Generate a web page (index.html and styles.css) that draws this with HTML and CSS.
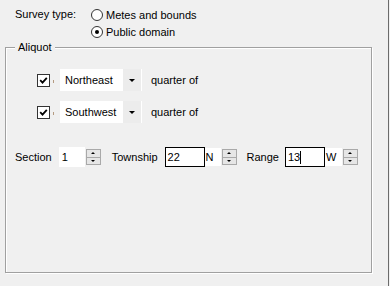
FILE: index.html
```html
<!DOCTYPE html>
<html>
<head>
<meta charset="utf-8">
<link rel="stylesheet" href="styles.css">
</head>
<body>
<div class="window">
  <div class="content">
    <div class="survey">
      <span class="survey-label">Survey type:</span>
      <div class="radios">
        <div class="radio"><span class="circle"></span><span>Metes and bounds</span></div>
        <div class="radio"><span class="circle on"></span><span>Public domain</span></div>
      </div>
    </div>
    <div class="group">
      <span class="group-title">Aliquot</span>
      <div class="aliquots">
        <div class="aliq-row">
          <span class="check"><svg width="9" height="9" viewBox="0 0 9 9"><path d="M1.2 4.2 L3.5 6.6 L7.8 1.8" fill="none" stroke="#000" stroke-width="1.8"/></svg></span>
          <span class="tick"></span>
          <div class="combo"><span class="combo-text">Northeast</span><span class="combo-btn"><span class="arrow"></span></span></div>
          <span class="after">quarter of</span>
        </div>
        <div class="aliq-row">
          <span class="check"><svg width="9" height="9" viewBox="0 0 9 9"><path d="M1.2 4.2 L3.5 6.6 L7.8 1.8" fill="none" stroke="#000" stroke-width="1.8"/></svg></span>
          <span class="tick"></span>
          <div class="combo"><span class="combo-text">Southwest</span><span class="combo-btn"><span class="arrow"></span></span></div>
          <span class="after">quarter of</span>
        </div>
      </div>
      <div class="loc-row">
        <span class="loc-label">Section</span>
        <div class="num">
          <span class="num-box plain">1</span>
          <span class="spin"><span class="spin-btn"><span class="up"></span></span><span class="spin-btn"><span class="down"></span></span></span>
        </div>
        <span class="loc-label">Township</span>
        <div class="num num-tight">
          <span class="num-box">22</span>
          <span class="unit unit-n">N</span>
          <span class="spin"><span class="spin-btn"><span class="up"></span></span><span class="spin-btn"><span class="down"></span></span></span>
        </div>
        <span class="loc-label loc-label-tight">Range</span>
        <div class="num">
          <span class="num-box">13<span class="caret"></span></span>
          <span class="unit unit-w">W</span>
          <span class="spin"><span class="spin-btn"><span class="up"></span></span><span class="spin-btn"><span class="down"></span></span></span>
        </div>
      </div>
    </div>
  </div>
  <div class="edge"></div>
</div>
</body>
</html>
```
FILE: styles.css
```css
html, body {
  margin: 0;
  padding: 0;
  background: #f0f0f0;
}
body {
  font: 11px "Liberation Sans", Arial, sans-serif;
  color: #000;
}
.window {
  display: flex;
  width: 390px;
  height: 286px;
  overflow: hidden;
}
.content {
  width: 388px;
  padding-top: 8px;
  box-sizing: border-box;
}
.edge {
  width: 1px;
  background: #6b6b6b;
}
.survey {
  display: flex;
  padding-left: 15px;
}
.survey-label {
  width: 76px;
  line-height: 13px;
}
.radios {
  display: flex;
  flex-direction: column;
  gap: 4px;
}
.radio {
  display: flex;
  align-items: center;
  gap: 3px;
  height: 13px;
}
.circle {
  width: 12px;
  height: 12px;
  box-sizing: border-box;
  border: 1px solid #333;
  border-radius: 50%;
  background: #fff;
  display: flex;
  align-items: center;
  justify-content: center;
}
.circle.on::after {
  content: "";
  width: 4px;
  height: 4px;
  border-radius: 50%;
  background: #000;
}
.group {
  position: relative;
  margin: 9px 0 0 5px;
  width: 367px;
  height: 226px;
  box-sizing: border-box;
  border: 1px solid #a0a0a0;
  box-shadow: inset 1px 1px 0 #fff, 1px 1px 0 #fff;
}
.group-title {
  position: absolute;
  top: -7px;
  left: 9px;
  padding: 0 3px;
  line-height: 13px;
  background: #f0f0f0;
}
.aliquots {
  padding: 21px 0 0 31px;
  display: flex;
  flex-direction: column;
  gap: 10px;
}
.aliq-row {
  display: flex;
  align-items: center;
  height: 22px;
}
.check {
  width: 13px;
  height: 13px;
  box-sizing: border-box;
  border: 1px solid #333;
  background: #fff;
  display: flex;
  align-items: center;
  justify-content: center;
}
.tick {
  width: 1px;
  height: 3px;
  margin: 2px 0 0 3px;
  background: #b49a80;
}
.combo {
  display: flex;
  width: 82px;
  height: 22px;
  margin-left: 6px;
  background: #fff;
}
.combo-text {
  flex: 1;
  padding-left: 5px;
  line-height: 22px;
}
.combo-btn {
  width: 18px;
  margin: 0 1px 0 0;
  background: #ececec;
  display: flex;
  align-items: center;
  justify-content: center;
}
.arrow {
  width: 0;
  height: 0;
  border-left: 3px solid transparent;
  border-right: 3px solid transparent;
  border-top: 3px solid #000;
}
.after {
  margin-left: 9px;
}
.loc-row {
  display: flex;
  align-items: center;
  margin-top: 24px;
  padding-left: 9px;
  height: 20px;
}
.loc-label {
  margin-right: 7px;
}
.loc-label-tight {
  margin-right: 6px;
}
.num {
  display: flex;
  align-items: center;
  margin-right: 11px;
}
.num-tight {
  margin-right: 10px;
}
.num-box {
  display: flex;
  align-items: center;
  width: 40px;
  height: 20px;
  box-sizing: border-box;
  border: 1px solid #000;
  background: #fff;
  padding-left: 2px;
}
.num-box.plain {
  width: 26px;
  border-color: #fff;
}
.caret {
  width: 1px;
  height: 13px;
  background: #000;
}
.unit {
  display: flex;
  align-items: center;
  height: 18px;
  padding-left: 1px;
  box-sizing: border-box;
  background: #fff;
}
.unit-n {
  width: 16px;
}
.unit-w {
  width: 17px;
}
.spin {
  display: flex;
  flex-direction: column;
  width: 15px;
  height: 16px;
  margin-left: 1px;
}
.spin-btn {
  flex: 1;
  box-sizing: border-box;
  border: 1px solid #a9a9a9;
  background: #e6e6e6;
  display: flex;
  align-items: center;
  justify-content: center;
}
.spin-btn + .spin-btn {
  border-top: none;
}
.up {
  width: 0;
  height: 0;
  border-left: 2px solid transparent;
  border-right: 2px solid transparent;
  border-bottom: 2px solid #000;
}
.down {
  width: 0;
  height: 0;
  border-left: 2px solid transparent;
  border-right: 2px solid transparent;
  border-top: 2px solid #000;
}
```
